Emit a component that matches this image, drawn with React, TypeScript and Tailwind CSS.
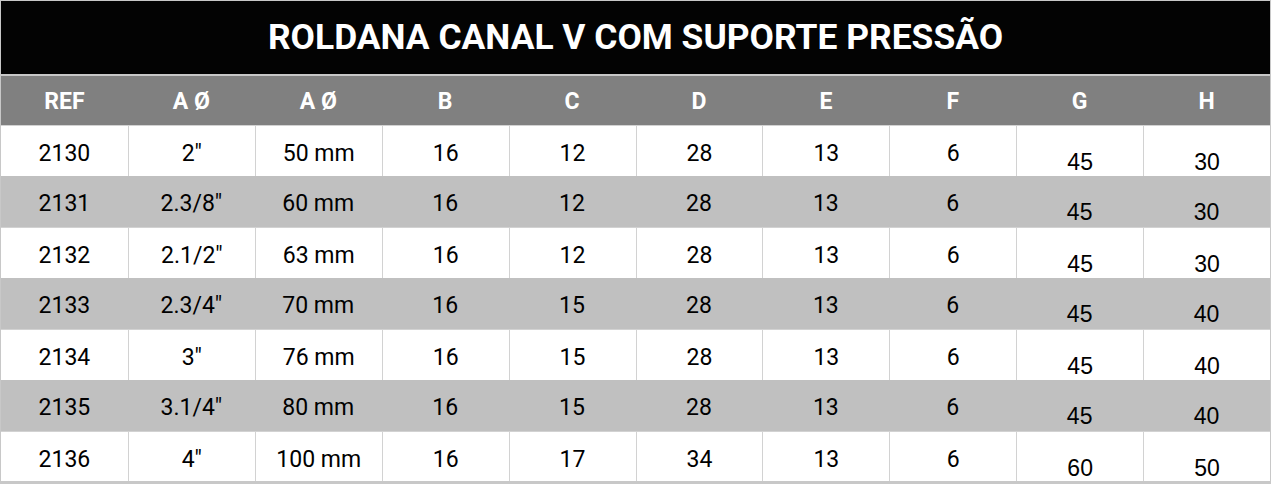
import React from "react";

const rows = [
  ["2130", "2\"", "50 mm", "16", "12", "28", "13", "6", "45", "30"],
  ["2131", "2.3/8\"", "60 mm", "16", "12", "28", "13", "6", "45", "30"],
  ["2132", "2.1/2\"", "63 mm", "16", "12", "28", "13", "6", "45", "30"],
  ["2133", "2.3/4\"", "70 mm", "16", "15", "28", "13", "6", "45", "40"],
  ["2134", "3\"", "76 mm", "16", "15", "28", "13", "6", "45", "40"],
  ["2135", "3.1/4\"", "80 mm", "16", "15", "28", "13", "6", "45", "40"],
  ["2136", "4\"", "100 mm", "16", "17", "34", "13", "6", "60", "50"],
];

const headers = ["REF", "A Ø", "A Ø", "B", "C", "D", "E", "F", "G", "H"];

export default function App() {
  return (
    <div className="w-[1271px] h-[484px] border-x border-t border-b-[3px] border-[#c8c8c8] bg-white overflow-hidden font-['Roboto',sans-serif]">
      <div className="h-[73px] bg-[#030303] flex items-center justify-center">
        <span className="text-white font-bold text-[35.4px] leading-none">
          ROLDANA CANAL V COM SUPORTE PRESSÃO
        </span>
      </div>
      <div className="h-[2px] bg-[#c8c8c8]" />
      <div className="h-[49px] bg-[#808080] grid grid-cols-10">
        {headers.map((h, i) => (
          <div key={i} className="flex items-center justify-center text-white font-bold text-[23px] leading-none pt-[2px]">
            {h}
          </div>
        ))}
      </div>
      {rows.map((r, ri) => {
        const gray = ri % 2 === 1;
        return (
          <div
            key={ri}
            className={
              gray
                ? "h-[51px] bg-[#c0c0c0] grid grid-cols-10"
                : "h-[51px] bg-white grid grid-cols-10 border-t border-[#d2d2d2]"
            }
          >
            {r.map((c, ci) => (
              <div
                key={ci}
                className={
                  "flex items-center justify-center text-[23px] leading-none text-black pt-[4px] " +
                  (gray ? "" : ci > 0 ? "border-l border-[#d2d2d2]" : "")
                }
              >
                {ci >= 8 ? (
                  <span className="font-['Liberation_Sans',Arial,sans-serif] mt-[18px]">{c}</span>
                ) : (
                  <span>{c}</span>
                )}
              </div>
            ))}
          </div>
        );
      })}
    </div>
  );
}
